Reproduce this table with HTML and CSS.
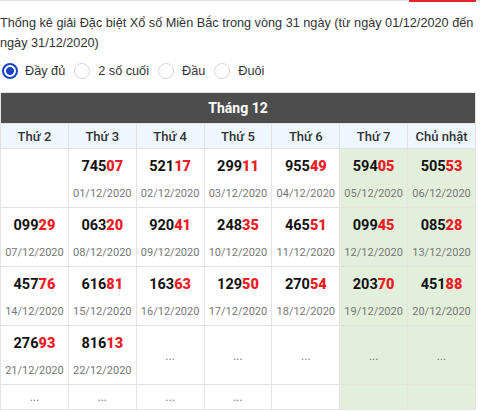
FILE: index.html
```html
<!DOCTYPE html>
<html lang="vi">
<head>
<meta charset="utf-8">
<link rel="stylesheet" href="styles.css">
</head>
<body>
<div class="topbar"><span class="tab-active"></span></div>
<p class="title">Thống kê giải Đặc biệt Xổ số Miền Bắc trong vòng 31 ngày (từ ngày 01/12/2020 đến ngày 31/12/2020)</p>
<div class="options">
  <label class="opt"><span class="radio checked"></span>Đầy đủ</label>
  <label class="opt"><span class="radio"></span>2 số cuối</label>
  <label class="opt"><span class="radio"></span>Đầu</label>
  <label class="opt"><span class="radio"></span>Đuôi</label>
</div>
<table class="cal">
  <thead>
    <tr><th colspan="7" class="month">Tháng 12</th></tr>
    <tr class="days"><th>Thứ 2</th><th>Thứ 3</th><th>Thứ 4</th><th>Thứ 5</th><th>Thứ 6</th><th>Thứ 7</th><th>Chủ nhật</th></tr>
  </thead>
  <tbody>
    <tr>
      <td></td>
      <td><div class="num">745<b>07</b></div><div class="date">01/12/2020</div></td>
      <td><div class="num">521<b>17</b></div><div class="date">02/12/2020</div></td>
      <td><div class="num">299<b>11</b></div><div class="date">03/12/2020</div></td>
      <td><div class="num">955<b>49</b></div><div class="date">04/12/2020</div></td>
      <td class="we"><div class="num">594<b>05</b></div><div class="date">05/12/2020</div></td>
      <td class="we"><div class="num">505<b>53</b></div><div class="date">06/12/2020</div></td>
    </tr>
    <tr>
      <td><div class="num">099<b>29</b></div><div class="date">07/12/2020</div></td>
      <td><div class="num">063<b>20</b></div><div class="date">08/12/2020</div></td>
      <td><div class="num">920<b>41</b></div><div class="date">09/12/2020</div></td>
      <td><div class="num">248<b>35</b></div><div class="date">10/12/2020</div></td>
      <td><div class="num">465<b>51</b></div><div class="date">11/12/2020</div></td>
      <td class="we"><div class="num">099<b>45</b></div><div class="date">12/12/2020</div></td>
      <td class="we"><div class="num">085<b>28</b></div><div class="date">13/12/2020</div></td>
    </tr>
    <tr>
      <td><div class="num">457<b>76</b></div><div class="date">14/12/2020</div></td>
      <td><div class="num">616<b>81</b></div><div class="date">15/12/2020</div></td>
      <td><div class="num">163<b>63</b></div><div class="date">16/12/2020</div></td>
      <td><div class="num">129<b>50</b></div><div class="date">17/12/2020</div></td>
      <td><div class="num">270<b>54</b></div><div class="date">18/12/2020</div></td>
      <td class="we"><div class="num">203<b>70</b></div><div class="date">19/12/2020</div></td>
      <td class="we"><div class="num">451<b>88</b></div><div class="date">20/12/2020</div></td>
    </tr>
    <tr>
      <td><div class="num">276<b>93</b></div><div class="date">21/12/2020</div></td>
      <td><div class="num">816<b>13</b></div><div class="date">22/12/2020</div></td>
      <td class="dots">...</td>
      <td class="dots">...</td>
      <td class="dots">...</td>
      <td class="we dots">...</td>
      <td class="we dots">...</td>
    </tr>
    <tr class="last">
      <td class="dots">...</td>
      <td class="dots">...</td>
      <td class="dots">...</td>
      <td class="dots">...</td>
      <td></td>
      <td class="we"></td>
      <td class="we"></td>
    </tr>
  </tbody>
</table>
</body>
</html>
```
FILE: styles.css
```css
html, body {
  margin: 0;
  padding: 0;
  background: #fff;
}
body {
  font-family: "Liberation Sans", Arial, sans-serif;
  color: #333;
  width: 480px;
}
.topbar {
  height: 1px;
  background: #e2e2e2;
  position: relative;
}
.tab-active {
  position: absolute;
  left: 409px;
  top: 0;
  width: 67px;
  height: 2px;
  background: #e3262e;
}
.title {
  margin: 12px 0 0 0;
  font-size: 12.7px;
  line-height: 20px;
  color: #333;
}
.options {
  display: flex;
  align-items: center;
  gap: 7px;
  margin-top: 8px;
  height: 20px;
  font-size: 12.7px;
}
.opt {
  display: flex;
  align-items: center;
}
.radio {
  box-sizing: border-box;
  width: 16px;
  height: 16px;
  border-radius: 50%;
  border: 1px solid #d6d6d6;
  background: #fff;
  margin: 0 8px 0 2px;
}
.radio.checked {
  border: 2px solid #1743c4;
  background: radial-gradient(circle, #1743c4 0 3.6px, #fff 4.2px);
  margin-right: 7px;
}
.cal {
  margin-top: 11px;
  width: 476px;
  border-collapse: collapse;
  table-layout: fixed;
  font-family: Roboto, "Liberation Sans", sans-serif;
  border: 1px solid #e3e3e3;
}
.cal th, .cal td {
  border: 1px solid #e3e3e3;
  text-align: center;
  padding: 0;
}
.month {
  background: #4d4d4d;
  color: #fff;
  height: 30px;
  font-size: 14px;
  font-weight: bold;
  border-color: #4d4d4d;
}
.days th {
  background: #eef6fe;
  height: 24px;
  font-size: 13px;
  font-weight: 500;
  color: #333;
}
.cal td {
  height: 56px;
  padding-top: 2px;
  vertical-align: middle;
}
.cal td.we { background: #e2f0db; }
.num {
  font-size: 14.5px;
  font-weight: bold;
  color: #111;
  line-height: 20px;
}
.num b { color: #ee1c25; }
.date {
  font-size: 11px;
  color: #777;
  line-height: 14px;
  margin-top: 10px;
}
.dots {
  font-size: 12px;
  color: #777;
}
.cal tr.last td { height: 24px; padding-top: 0; }
```
